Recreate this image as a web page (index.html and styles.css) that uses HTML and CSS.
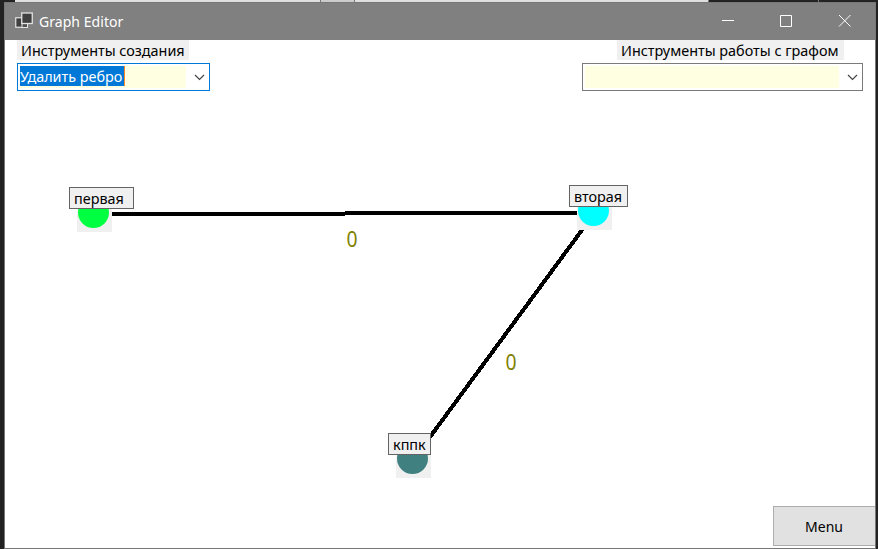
FILE: index.html
```html
<!DOCTYPE html>
<html lang="ru">
<head>
<meta charset="utf-8">
<title>Graph Editor</title>
<link rel="stylesheet" href="styles.css">
</head>
<body>
<div class="backdrop"><i class="strip strip-a"></i><i class="strip strip-b"></i><i class="strip strip-c"></i><i class="strip-dark"></i></div>
<div class="window">
  <header class="titlebar">
    <svg class="app-icon" width="18" height="18" viewBox="0 0 18 18">
      <rect x=".75" y="5.75" width="8" height="9.5" fill="#404040" stroke="#e4e4e4" stroke-width="1.2"/>
      <rect x="7" y="11" width="5.500" height="4.500" fill="#505050" stroke="#e4e4e4"/>
      <rect x="6.75" y="1" width="10.5" height="10.5" fill="#404040" stroke="#e4e4e4" stroke-width="1.3"/>
    </svg>
    <span class="title">Graph Editor</span>
    <div class="controls">
      <svg width="58" height="38" viewBox="0 0 58 38"><path d="M23 17.500h12"/></svg>
      <svg width="58" height="38" viewBox="0 0 58 38"><path d="M23.500 12.500h11v11h-11z"/></svg>
      <svg width="58" height="38" viewBox="0 0 58 38"><path d="M24 12l11.500 11.500M35.500 12L24 23.500"/></svg>
    </div>
  </header>
  <main class="client">
    <div class="tools">
      <section class="tool tool-create">
        <label class="caption">Инструменты создания</label>
        <div class="combo focused">
          <div class="field"><span class="selected">Удалить ребро</span></div>
          <svg class="chevron" width="11" height="7" viewBox="0 0 11 7"><path d="M1 1l4.500 4.500L10 1"/></svg>
        </div>
      </section>
      <section class="tool tool-work">
        <label class="caption">Инструменты работы с графом</label>
        <div class="combo">
          <div class="field"></div>
          <svg class="chevron" width="11" height="7" viewBox="0 0 11 7"><path d="M1 1l4.500 4.500L10 1"/></svg>
        </div>
      </section>
    </div>
    <svg class="edges" width="870" height="508" viewBox="5 40 870 508" shape-rendering="crispEdges">
      <path d="M112 212h233v-1h232v4h-232v1h-233z"/>
      <path d="M579.500 230h5L431 439h-5z"/>
    </svg>
    <span class="weight w1">0</span>
    <span class="weight w2">0</span>
    <div class="node n1"><b class="disc"></b></div>
    <div class="node n2"><b class="disc"></b></div>
    <div class="node n3"><b class="disc"></b></div>
    <span class="name m1">первая</span>
    <span class="name m2">вторая</span>
    <span class="name m3">кппк</span>
    <button class="menu">Menu</button>
  </main>
</div>
</body>
</html>
```
FILE: styles.css
```css
* { box-sizing: border-box; }
body {
  margin: 0; width: 878px; height: 549px; overflow: hidden; position: relative;
  background: #222; color: #000;
  font: 14.4px/20px "Noto Sans", "Open Sans", sans-serif;
}
.backdrop { display: flex; height: 2px; padding-left: 15px; }
.strip { background: #dfdfdf; border-right: 1px solid #777; }
.strip-a { width: 306px; }
.strip-b { width: 34px; background: #ccc; }
.strip-c { width: 354px; }
.strip-dark { width: 110px; border-right: 1px solid #777; }
.window {
  width: 872px; height: 547px; margin-left: 4px;
  border: 1px solid #777; border-top: 0; background: #fff;
}
.titlebar {
  height: 38px; display: flex; align-items: center; padding-left: 10px;
  background: #808080; color: #fff; border-top: 1px solid #777;
}
.app-icon { margin-top: -1px; }
.title { margin-left: 6px; flex: 1; white-space: nowrap; font-size: 14px; letter-spacing: .05px; }
.controls { display: flex; margin-right: 2px; }
.controls path { fill: none; stroke: #fff; stroke-width: 1; }
.client { position: relative; height: 508px; overflow: hidden; }
.tools { display: flex; justify-content: space-between; padding: 0 12px; }
.tool-create { width: 193px; }
.tool-work { width: 281px; }
.caption {
  display: block; height: 20px; width: 172px; padding-left: 4px; line-height: 22px;
  background: #f0f0f0; white-space: nowrap;
}
.tool-work .caption { width: 227px; margin-left: 35px; }
.combo {
  display: flex; align-items: center; height: 28px; margin-top: 3px;
  padding-left: 2px; border: 1px solid #7a7a7a; background: #fff;
}
.combo.focused { border-color: #0078d7; }
.field { width: 166px; height: 22px; background: #ffffe1; white-space: nowrap; }
.tool-work .field { width: 254px; }
.selected {
  display: inline-block; height: 20px; width: 105px; background: #0078d7; color: #fff;
  border-right: 1px solid #ff8728; vertical-align: top; line-height: 22px;
}
.chevron { margin-left: 8px; }
.chevron path { fill: none; stroke: #444; stroke-width: 1.2; }
.edges { position: absolute; left: 0; top: 0; }
.weight {
  position: absolute; font-size: 21px; line-height: 28px; color: #808000;
  transform: scaleX(.92);
}
.w1 { left: 341px; top: 185px; }
.w2 { left: 500px; top: 308px; }
.node { position: absolute; width: 35px; height: 35px; background: #f0f0f0; }
.disc { display: block; width: 31px; height: 31px; margin: 0 1px; border-radius: 50%; }
.n1 { left: 72px; top: 157px; }
.n2 { left: 572px; top: 155px; }
.n3 { left: 391px; top: 403px; }
.n1 .disc { background: #00ff40; }
.n2 .disc { background: #00ffff; }
.n3 .disc { background: #408080; }
.name {
  position: absolute; height: 22px; padding-left: 4px; line-height: 22px;
  background: #f0f0f0; border: 1px solid #646464; white-space: nowrap;
}
.m1 { left: 64px; top: 147px; width: 65px; }
.m2 { left: 564px; top: 145px; width: 59px; }
.m3 { left: 383px; top: 393px; width: 43px; }
.menu {
  position: absolute; left: 768px; top: 466px; width: 103px; height: 40px;
  padding: 2px 2px 0 0; border: 1px solid #adadad; border-right: 0; background: #e1e1e1;
  color: #000; font: inherit; font-size: 14px; line-height: 36px;
}
```
